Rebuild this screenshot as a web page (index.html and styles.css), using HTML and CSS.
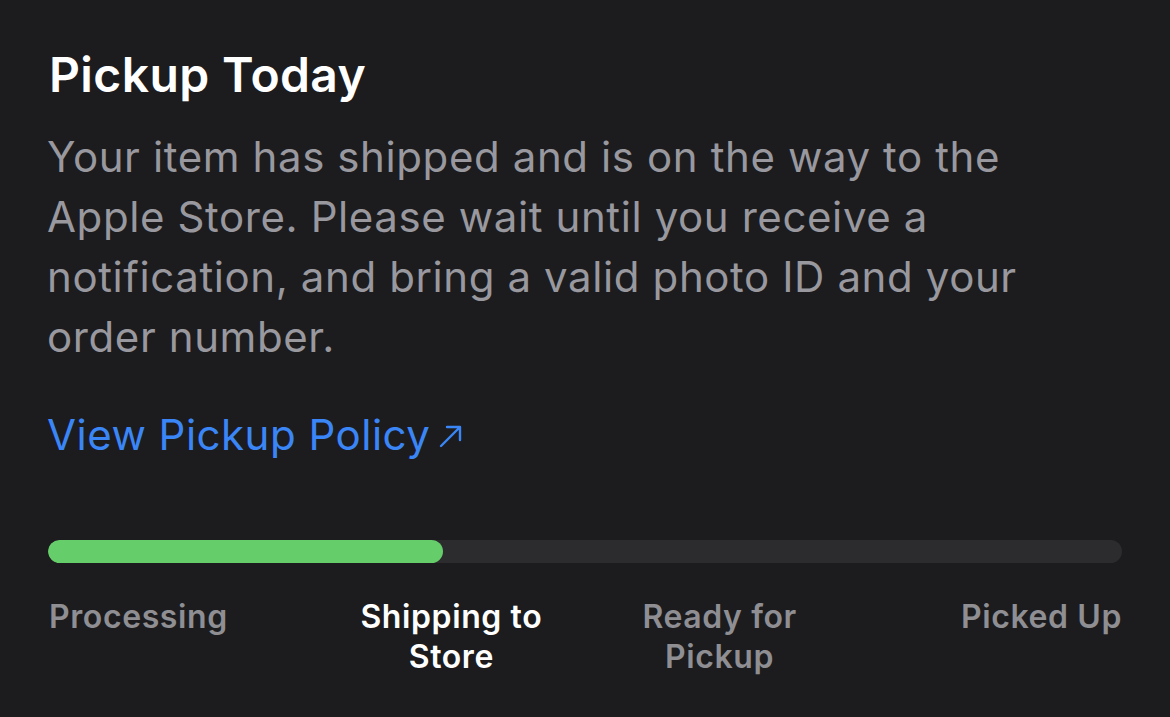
FILE: index.html
```html
<!DOCTYPE html>
<html>
<head>
<meta charset="utf-8">
<link rel="stylesheet" href="styles.css">
</head>
<body>
<main class="card">
  <h1 class="title">Pickup Today</h1>
  <p class="desc">Your item has shipped and is on the way to the Apple Store. Please wait until you receive a notification, and bring a valid photo ID and your order number.</p>
  <a class="link" href="#">View Pickup Policy<svg class="arrow" viewBox="0 0 26 26" width="26" height="26"><path d="M3 23 L22 4 M9 4 H22 V17" fill="none" stroke="currentColor" stroke-width="2.4" stroke-linecap="round" stroke-linejoin="round"/></svg></a>
  <div class="track"><div class="fill" style="width: 36.8%"></div></div>
  <div class="steps">
    <span class="step first">Processing</span>
    <span class="step active">Shipping to<br>Store</span>
    <span class="step">Ready for<br>Pickup</span>
    <span class="step last">Picked Up</span>
  </div>
</main>
</body>
</html>
```
FILE: styles.css
```css
html, body {
  margin: 0;
  background: #1c1c1e;
}
body {
  font-family: Inter, "Noto Sans", sans-serif;
}
.card {
  padding: 45px 48px 0 47px;
}
.title {
  margin: 0 0 22px 2px;
  font-size: 48px;
  font-weight: 600;
  line-height: 60px;
  color: #ffffff;
  letter-spacing: 0.4px;
}
.desc {
  margin: 0;
  font-size: 42px;
  line-height: 60px;
  color: #98989e;
  font-weight: 400;
  letter-spacing: 0.6px;
}
.link {
  display: flex;
  align-items: center;
  margin-top: 38px;
  font-size: 42px;
  line-height: 60px;
  color: #3b86f7;
  text-decoration: none;
  letter-spacing: 0.5px;
}
.arrow {
  margin-left: 8px;
  margin-top: 2px;
}
.track {
  margin-top: 75px;
  margin-left: 1px;
  height: 23px;
  border-radius: 12px;
  background: #2c2c2e;
  overflow: hidden;
}
.fill {
  height: 100%;
  border-radius: 12px;
  background: #65cd69;
}
.steps {
  display: grid;
  grid-template-columns: repeat(4, 1fr);
  margin-top: 34px;
  margin-left: 2px;
  font-size: 32px;
  font-weight: 600;
  line-height: 40px;
  color: #8e8e93;
  letter-spacing: 0.6px;
}
.step {
  text-align: center;
}
.step.first {
  text-align: left;
}
.step.last {
  text-align: right;
}
.step.active {
  color: #ffffff;
}
```
